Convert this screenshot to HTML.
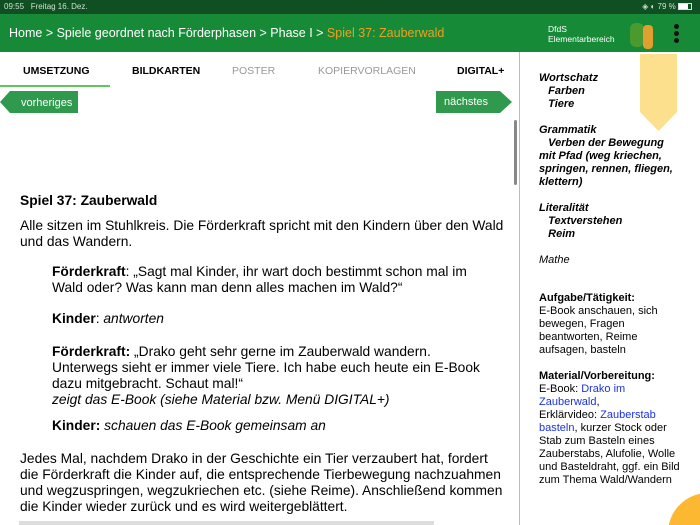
<!DOCTYPE html>
<html><head><meta charset="utf-8"><style>
*{margin:0;padding:0;box-sizing:border-box}
html,body{width:700px;height:525px;overflow:hidden}
body{background:#fff;font-family:"Liberation Sans",sans-serif;position:relative;color:#000}
.abs{position:absolute}
.sb{left:0;top:0;width:700px;height:14px;background:#0f4f22;color:#cfe0cf;font-size:8px;line-height:14px;padding-left:4px}
.hd{left:0;top:14px;width:700px;height:38px;background:#178a38;color:#fff}
.hd .bc{position:absolute;left:9px;top:12px;font-size:12.5px}
.tabs{top:65px;font-size:10.5px;font-weight:bold}
.main{left:20px;width:484px;font-size:13.8px;line-height:16px;white-space:nowrap}
.ind{left:52px;width:450px;font-size:13.8px;line-height:16px;white-space:nowrap}
.side{left:539px;width:150px;font-size:11px;line-height:13px;white-space:nowrap}
a{color:#1a33dd}
</style></head><body>
<div class="abs sb">09:55&nbsp;&nbsp; Freitag 16. Dez.<span style="position:absolute;right:8px">◈ ◐ 79 % <span style="display:inline-block;width:14px;height:7px;border:1px solid #ddd;background:linear-gradient(90deg,#fff 75%,transparent 75%);vertical-align:middle"></span></span></div>
<div class="abs hd"><div class="bc">Home &gt; Spiele geordnet nach Förderphasen &gt; Phase I &gt; <span style="color:#f0a020">Spiel 37: Zauberwald</span></div>
<div style="position:absolute;left:548px;top:10px;font-size:8.5px;line-height:10px">DfdS<br>Elementarbereich</div>
<div style="position:absolute;left:626px;top:3px;width:32px;height:33px"><div style="position:absolute;left:4px;top:6px;width:14px;height:24px;background:#4a9a30;border-radius:6px"></div><div style="position:absolute;left:17px;top:8px;width:10px;height:24px;background:#e0a030;border-radius:4px"></div></div>
<div style="position:absolute;left:674px;top:10px;width:5px;height:5px;background:#111;border-radius:50%;box-shadow:0 7px 0 #111,0 14px 0 #111"></div></div>
<div class="abs" style="left:519px;top:52px;width:1px;height:473px;background:#bbb"></div>
<div class="abs tabs" style="left:23px">UMSETZUNG</div>
<div class="abs tabs" style="left:132px">BILDKARTEN</div>
<div class="abs tabs" style="left:232px;color:#999;font-weight:normal">POSTER</div>
<div class="abs tabs" style="left:318px;color:#999;font-weight:normal">KOPIERVORLAGEN</div>
<div class="abs tabs" style="left:457px">DIGITAL+</div>
<div class="abs" style="left:0;top:85px;width:110px;height:2px;background:#5ec85e"></div>
<svg class="abs" style="left:0;top:90px" width="80" height="24"><polygon points="0,12 10,1 78,1 78,23 10,23" fill="#2f9a4e"/><text x="21" y="16" font-family="Liberation Sans" font-size="11" fill="#fff">vorheriges</text></svg>
<svg class="abs" style="left:435px;top:90px" width="80" height="24"><polygon points="1,1 65,1 77,12 65,23 1,23" fill="#2f9a4e"/><text x="9" y="15" font-family="Liberation Sans" font-size="11" fill="#fff">nächstes</text></svg>
<div class="abs" style="left:514px;top:120px;width:3px;height:65px;background:#888;border-radius:2px"></div>
<div class="abs main" style="top:193px;font-weight:bold">Spiel 37: Zauberwald</div>
<div class="abs main" style="top:218px">Alle sitzen im Stuhlkreis. Die Förderkraft spricht mit den Kindern über den Wald<br>und das Wandern.</div>
<div class="abs ind" style="top:264px"><b>Förderkraft</b>: „Sagt mal Kinder, ihr wart doch bestimmt schon mal im<br>Wald oder? Was kann man denn alles machen im Wald?“</div>
<div class="abs ind" style="top:311px"><b>Kinder</b>: <i>antworten</i></div>
<div class="abs ind" style="top:344px"><b>Förderkraft:</b> „Drako geht sehr gerne im Zauberwald wandern.<br>Unterwegs sieht er immer viele Tiere. Ich habe euch heute ein E-Book<br>dazu mitgebracht. Schaut mal!“<br><i>zeigt das E-Book (siehe Material bzw. Menü DIGITAL+)</i></div>
<div class="abs ind" style="top:418px"><b>Kinder:</b> <i>schauen das E-Book gemeinsam an</i></div>
<div class="abs main" style="top:451px">Jedes Mal, nachdem Drako in der Geschichte ein Tier verzaubert hat, fordert<br>die Förderkraft die Kinder auf, die entsprechende Tierbewegung nachzuahmen<br>und wegzuspringen, wegzukriechen etc. (siehe Reime). Anschließend kommen<br>die Kinder wieder zurück und es wird weitergeblättert.</div>
<div class="abs" style="left:19px;top:521px;width:415px;height:4px;background:#ddd"></div>
<svg class="abs" style="left:640px;top:54px" width="37" height="78"><polygon points="0,0 37,0 37,58 18.5,77 0,58" fill="#fde08e"/></svg>
<div class="abs side" style="top:72px;font-weight:bold;font-style:italic">Wortschatz<br>&nbsp;&nbsp;&nbsp;Farben<br>&nbsp;&nbsp;&nbsp;Tiere</div>
<div class="abs side" style="top:124px;font-weight:bold;font-style:italic">Grammatik<br>&nbsp;&nbsp;&nbsp;Verben der Bewegung<br>mit Pfad (weg kriechen,<br>springen, rennen, fliegen,<br>klettern)</div>
<div class="abs side" style="top:202px;font-weight:bold;font-style:italic">Literalität<br>&nbsp;&nbsp;&nbsp;Textverstehen<br>&nbsp;&nbsp;&nbsp;Reim</div>
<div class="abs side" style="top:254px;font-style:italic">Mathe</div>
<div class="abs side" style="top:292px"><b>Aufgabe/Tätigkeit:</b><br>E-Book anschauen, sich<br>bewegen, Fragen<br>beantworten, Reime<br>aufsagen, basteln</div>
<div class="abs side" style="top:370px"><b>Material/Vorbereitung:</b><br>E-Book: <a>Drako im</a><br><a>Zauberwald</a>,<br>Erklärvideo: <a>Zauberstab</a><br><a>basteln</a>, kurzer Stock oder<br>Stab zum Basteln eines<br>Zauberstabs, Alufolie, Wolle<br>und Basteldraht, ggf. ein Bild<br>zum Thema Wald/Wandern</div>
<svg class="abs" style="left:668px;top:493px" width="32" height="32"><circle cx="40" cy="40" r="40" fill="#fbb830"/></svg>
</body></html>
